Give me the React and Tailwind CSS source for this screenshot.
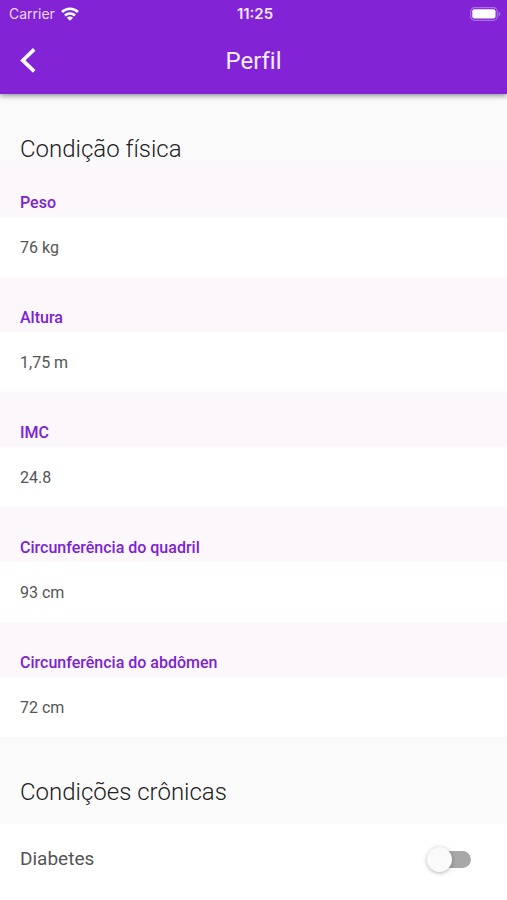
import { useState } from 'react';

const measures = [
  { id: 'peso', label: 'Peso', value: '76 kg' },
  { id: 'altura', label: 'Altura', value: '1,75 m' },
  { id: 'imc', label: 'IMC', value: '24.8' },
  { id: 'quadril', label: 'Circunferência do quadril', value: '93 cm' },
  { id: 'abdomen', label: 'Circunferência do abdômen', value: '72 cm' },
];

function StatusBar() {
  return (
    <div className="grid grid-cols-3 items-center h-7 pl-[9px] pr-[6px] font-[Inter,sans-serif] leading-5">
      <div className="flex items-center gap-[6px] text-sm text-[#ecd9fb]">
        <span>Carrier</span>
        <svg width="18" height="14" viewBox="0 0 18 14" fill="none" stroke="white" strokeWidth="2.7">
          <path d="M1 4.9C5.5 0.7 12.5 0.7 17 4.9" />
          <path d="M4 8.5C6.8 5.8 11.2 5.8 14 8.5" />
          <path d="M9 13.8L5.9 10.7C7.6 9.2 10.4 9.2 12.1 10.7Z" fill="white" stroke="none" />
        </svg>
      </div>
      <span className="text-center text-[15px] font-semibold text-[#f3e6fd]">11:25</span>
      <svg className="justify-self-end" width="31" height="14" viewBox="0 0 31 14" fill="none">
        <rect x="0.7" y="0.7" width="26.6" height="12.6" rx="3.8" stroke="#ac6de7" strokeWidth="1.2" />
        <rect x="2.3" y="2.2" width="23.2" height="9.4" rx="2" fill="white" />
        <path d="M28.6 4.8C30.8 5.4 30.8 8.6 28.6 9.2Z" fill="#ac6de7" />
      </svg>
    </div>
  );
}

function Header() {
  return (
    <header className="relative z-10 bg-[#8224d6] text-white shadow-[0_2px_5px_rgba(0,0,0,0.4)]">
      <StatusBar />
      <div className="grid grid-cols-[56px_1fr_56px] items-center h-[66px]">
        <button type="button" aria-label="Voltar" className="flex items-center justify-center h-12">
          <svg width="18" height="26" viewBox="0 0 18 26" fill="none" stroke="white" strokeWidth="3.6">
            <path d="M15.2 1.4L3.8 12.4L15.2 23.4" />
          </svg>
        </button>
        <h1 className="text-center text-2xl text-[#f6ecfe] [font-variant-ligatures:none]">Perfil</h1>
      </div>
    </header>
  );
}

function Field({ id, label, value }) {
  return (
    <div>
      <label htmlFor={id} className="block bg-[#fbf7fb] px-5 pt-[30px] pb-[3px] text-base leading-[22px] font-medium text-[#7d22d3]">
        {label}
      </label>
      <input
        id={id}
        type="text"
        defaultValue={value}
        className="block w-full h-[60px] px-5 bg-white text-base text-[#555] outline-none"
      />
    </div>
  );
}

export default function App() {
  const [diabetes, setDiabetes] = useState(false);

  return (
    <div className="min-h-screen bg-white font-[Roboto,sans-serif]">
      <Header />
      <main>
        <section>
          <h2 className="bg-[#fafafa] px-5 pt-[42px] text-2xl leading-[26px] font-light text-[#222]">Condição física</h2>
          {measures.map((item) => (
            <Field key={item.id} {...item} />
          ))}
        </section>

        <section>
          <h2 className="bg-[#fafafa] px-5 pt-[42px] pb-[19px] text-2xl leading-[26px] font-light text-[#222]">Condições crônicas</h2>
          <div className="flex items-center justify-between h-[70px] pl-5 pr-9">
            <label htmlFor="diabetes" className="text-[19px] text-[#555]">Diabetes</label>
            <span className="relative flex items-center w-11 h-7">
              <input
                id="diabetes"
                type="checkbox"
                role="switch"
                checked={diabetes}
                onChange={(e) => setDiabetes(e.target.checked)}
                className="peer appearance-none ml-1 w-10 h-[17px] rounded-full bg-[#a8a8a8] checked:bg-[#c191eb] cursor-pointer"
              />
              <span className="absolute left-0 w-[25px] h-[25px] rounded-full bg-[#fafafa] shadow-[0_1px_4px_rgba(0,0,0,0.3)] pointer-events-none peer-checked:left-[19px] peer-checked:bg-[#8224d6]" />
            </span>
          </div>
        </section>
      </main>
    </div>
  );
}
